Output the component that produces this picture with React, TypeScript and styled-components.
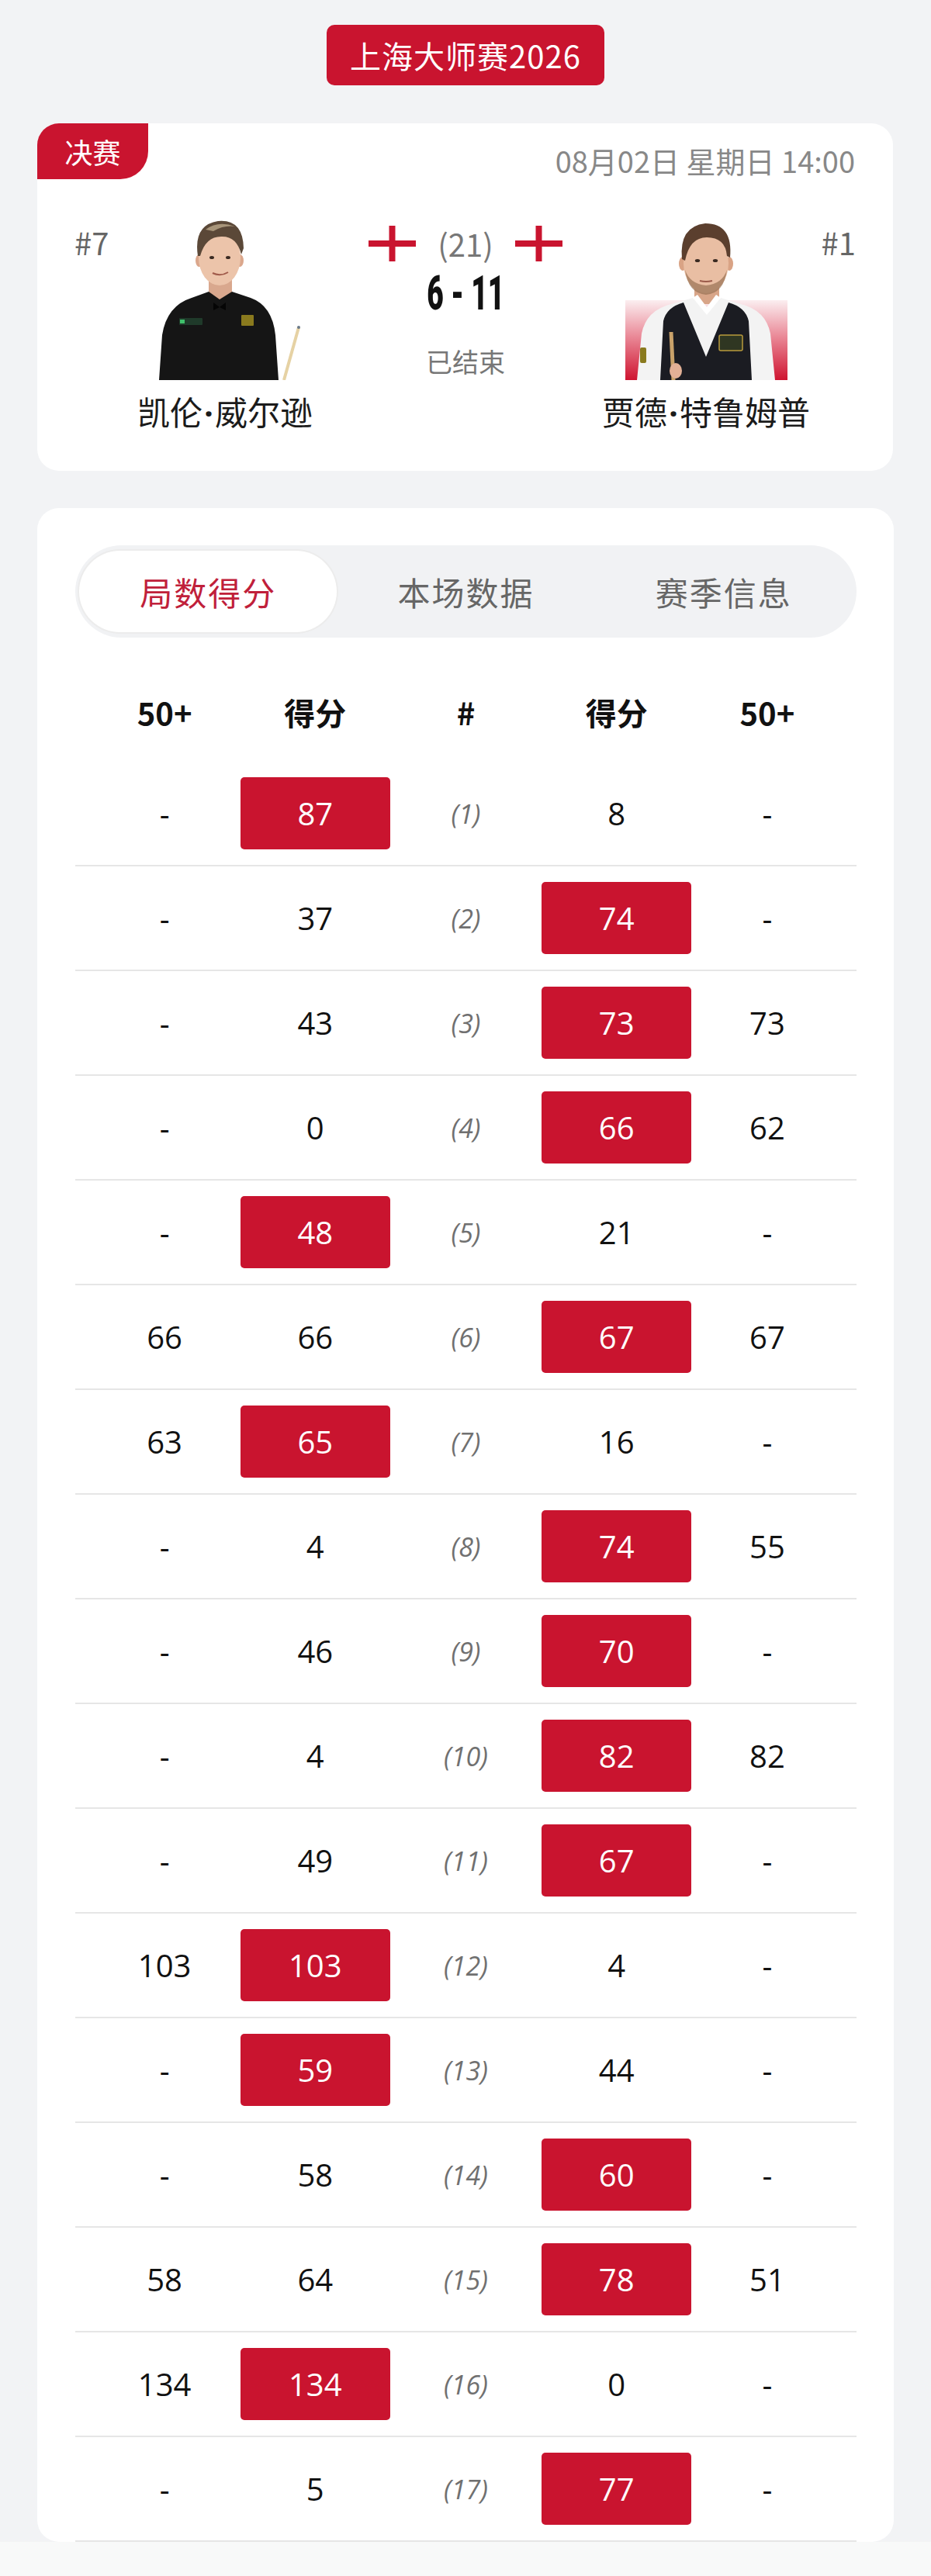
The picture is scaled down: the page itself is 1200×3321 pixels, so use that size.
import styled, { createGlobalStyle } from "styled-components";

const RED = "#c9142f";

type Frame = [string, number, number, number, string];

const frames: Frame[] = [
  ["-", 87, 1, 8, "-"],
  ["-", 37, 2, 74, "-"],
  ["-", 43, 3, 73, "73"],
  ["-", 0, 4, 66, "62"],
  ["-", 48, 5, 21, "-"],
  ["66", 66, 6, 67, "67"],
  ["63", 65, 7, 16, "-"],
  ["-", 4, 8, 74, "55"],
  ["-", 46, 9, 70, "-"],
  ["-", 4, 10, 82, "82"],
  ["-", 49, 11, 67, "-"],
  ["103", 103, 12, 4, "-"],
  ["-", 59, 13, 44, "-"],
  ["-", 58, 14, 60, "-"],
  ["58", 64, 15, 78, "51"],
  ["134", 134, 16, 0, "-"],
  ["-", 5, 17, 77, "-"],
];

const GlobalStyle = createGlobalStyle`
  body {
    margin: 0;
    background: #f2f3f5;
    font-family: "Noto Sans CJK SC", "Noto Sans", sans-serif;
    color: #111;
  }
`;

const EnglandFlag = () => (
  <svg width="61" height="46" viewBox="0 0 61 46">
    <rect x="0" y="19" width="61" height="8" fill={RED} />
    <rect x="26.5" y="0" width="8" height="46" fill={RED} />
  </svg>
);

const WilsonPhoto = () => (
  <svg width="210" height="208" viewBox="0 0 210 208">
    <path d="M84 76 L84 104 L114 104 L114 76 Z" fill="#d9a88e" />
    <path
      d="M20 208 L24 150 Q30 112 62 102 L84 94 L98 104 L114 94 L138 102 Q166 112 170 150 L174 208 Z"
      fill="#151515"
    />
    <path d="M90 108 L98 114 L106 108 L106 118 L98 114 L90 118 Z" fill="#050505" />
    <rect x="46" y="128" width="30" height="9" rx="1" fill="#1f3a2a" />
    <rect x="47" y="130" width="6" height="5" fill="#3fbf6a" />
    <rect x="126" y="124" width="16" height="14" rx="1" fill="#8a7a1e" />
    <ellipse cx="72" cy="54" rx="5" ry="8" fill="#dba78c" />
    <ellipse cx="124" cy="54" rx="5" ry="8" fill="#dba78c" />
    <ellipse cx="98" cy="50" rx="27" ry="36" fill="#ecc4aa" />
    <path
      d="M70 48 Q64 8 96 3 Q128 0 129 38 L126 46 Q120 22 100 23 Q80 23 73 48 Z"
      fill="#5b4838"
    />
    <path d="M80 14 Q96 2 118 10 Q104 8 90 16 Z" fill="#a8957a" />
    <ellipse cx="88" cy="50" rx="3" ry="2" fill="#3a2a22" />
    <ellipse cx="109" cy="50" rx="3" ry="2" fill="#3a2a22" />
    <path d="M89 70 Q99 75 109 69" stroke="#a05a4a" strokeWidth="2" fill="none" />
    <line x1="200" y1="140" x2="181" y2="208" stroke="#e6d2a4" strokeWidth="4" />
    <circle cx="200" cy="140" r="2" fill="#6a7a8a" />
  </svg>
);

const TrumpPhoto = () => (
  <svg width="210" height="208" viewBox="0 0 210 208">
    <defs>
      <linearGradient id="trumpBg" x1="0" y1="0" x2="0" y2="1">
        <stop offset="0" stopColor="#fbeef0" />
        <stop offset="0.45" stopColor="#ea8a98" />
        <stop offset="1" stopColor="#cf1430" />
      </linearGradient>
    </defs>
    <rect x="1" y="105" width="209" height="103" fill="url(#trumpBg)" />
    <path d="M90 82 L90 110 L122 110 L122 82 Z" fill="#d8a588" />
    <path
      d="M16 208 L22 148 Q28 118 60 110 L88 102 L106 120 L124 102 L150 110 Q182 118 188 148 L194 208 Z"
      fill="#f3f3f3"
    />
    <path
      d="M46 208 L50 132 Q54 114 76 108 L105 178 L134 108 Q156 114 160 132 L164 208 Z"
      fill="#1b1c22"
    />
    <path d="M88 102 L106 124 L124 102 L118 98 L106 114 L94 98 Z" fill="#ffffff" />
    <rect x="122" y="150" width="30" height="20" rx="2" fill="#2f3622" stroke="#b99a3c" strokeWidth="1.5" />
    <rect x="20" y="166" width="8" height="20" rx="2" fill="#8a7a1e" />
    <ellipse cx="75" cy="58" rx="5" ry="9" fill="#d9a385" />
    <ellipse cx="135" cy="58" rx="5" ry="9" fill="#d9a385" />
    <ellipse cx="105" cy="57" rx="29" ry="39" fill="#e9bea3" />
    <path
      d="M78 66 Q82 96 105 98 Q128 96 132 66 Q126 84 105 86 Q84 84 78 66 Z"
      fill="#9c7558"
      opacity="0.75"
    />
    <path
      d="M74 52 Q70 10 104 6 Q140 6 136 50 L132 48 Q130 24 106 24 Q84 24 78 54 Z"
      fill="#5b3f2e"
    />
    <ellipse cx="94" cy="54" rx="3.2" ry="2" fill="#3a2a22" />
    <ellipse cx="117" cy="54" rx="3.2" ry="2" fill="#3a2a22" />
    <path d="M97 80 Q105 82 113 80" stroke="#9a5a4a" strokeWidth="2" fill="none" />
    <line x1="60" y1="146" x2="63" y2="208" stroke="#c9a26a" strokeWidth="5" />
    <ellipse cx="66" cy="196" rx="8" ry="10" fill="#e2b096" />
  </svg>
);

export default function App() {
  return (
    <>
      <GlobalStyle />
      <Page>
        <EventBadge>上海大师赛2026</EventBadge>

        <MatchCard>
          <CardHead>
            <RoundTag>决赛</RoundTag>
            <DateText>08月02日 星期日 14:00</DateText>
          </CardHead>
          <Players>
            <Rank>#7</Rank>
            <Player>
              <WilsonPhoto />
              <PlayerName>
                凯伦<Dot>·</Dot>威尔逊
              </PlayerName>
            </Player>
            <Center>
              <FlagRow>
                <EnglandFlag />
                <BestOf>(21)</BestOf>
                <EnglandFlag />
              </FlagRow>
              <Score>
                <span>6 - 11</span>
              </Score>
              <Status>已结束</Status>
            </Center>
            <Player>
              <TrumpPhoto />
              <PlayerName>
                贾德<Dot>·</Dot>特鲁姆普
              </PlayerName>
            </Player>
            <Rank $right>#1</Rank>
          </Players>
        </MatchCard>

        <FramesCard>
          <Tabs>
            <Tab $active>局数得分</Tab>
            <Tab>本场数据</Tab>
            <Tab>赛季信息</Tab>
          </Tabs>

          <TableHead>
            <span>50+</span>
            <span>得分</span>
            <span>#</span>
            <span>得分</span>
            <span>50+</span>
          </TableHead>

          {frames.map(([lBreak, lScore, n, rScore, rBreak]) => (
            <FrameRow key={n}>
              <Cell>{lBreak}</Cell>
              <Cell>
                <Points $win={lScore > rScore}>{lScore}</Points>
              </Cell>
              <FrameNo>({n})</FrameNo>
              <Cell>
                <Points $win={rScore > lScore}>{rScore}</Points>
              </Cell>
              <Cell>{rBreak}</Cell>
            </FrameRow>
          ))}
        </FramesCard>
        <BottomStrip />
      </Page>
    </>
  );
}

const Page = styled.div`
  padding-top: 32px;
`;

const EventBadge = styled.div`
  width: 358px;
  height: 78px;
  margin: 0 auto;
  border-radius: 10px;
  background: ${RED};
  color: #fff;
  font-size: 40px;
  letter-spacing: 1px;
  display: flex;
  align-items: center;
  justify-content: center;
`;

const MatchCard = styled.div`
  margin: 49px 49px 0 48px;
  background: #fff;
  border-radius: 28px;
  overflow: hidden;
  padding-bottom: 50px;
`;

const CardHead = styled.div`
  display: flex;
  justify-content: space-between;
  align-items: flex-start;
  height: 72px;
`;

const RoundTag = styled.div`
  width: 143px;
  height: 72px;
  background: ${RED};
  border-bottom-right-radius: 36px;
  color: #fff;
  font-size: 36px;
  display: flex;
  align-items: center;
  justify-content: center;
`;

const DateText = styled.div`
  margin: 27px 49px 0 0;
  font-size: 38px;
  line-height: 42px;
  color: #888;
`;

const Players = styled.div`
  display: grid;
  grid-template-columns: 60px 268px 1fr 268px 59px;
  padding: 0 48px;
  margin-top: 51px;
`;

const Rank = styled.div<{ $right?: boolean }>`
  padding-top: 6px;
  font-size: 40px;
  line-height: 48px;
  color: #666;
  text-align: ${(p) => (p.$right ? "right" : "left")};
`;

const Player = styled.div`
  display: flex;
  flex-direction: column;
  align-items: center;
`;

const PlayerName = styled.div`
  margin-top: 15px;
  font-size: 42px;
  line-height: 50px;
  color: #1b1b1b;
  white-space: nowrap;
`;

const Dot = styled.span`
  font-family: "Open Sans", sans-serif;
  font-weight: 700;
  padding: 0 2px;
`;

const Center = styled.div`
  display: flex;
  flex-direction: column;
  align-items: center;
  padding-top: 9px;
`;

const FlagRow = styled.div`
  display: flex;
  align-items: center;
  gap: 28px;
`;

const BestOf = styled.span`
  font-size: 40px;
  line-height: 46px;
  color: #777;
`;

const Score = styled.div`
  margin-top: 11px;
  height: 60px;
  display: flex;
  justify-content: center;
  span {
    display: inline-block;
    font-family: Roboto, "DejaVu Sans", sans-serif;
    font-weight: 900;
    font-size: 62px;
    line-height: 60px;
    color: #111;
    transform: scaleX(0.6);
    white-space: nowrap;
  }
`;

const Status = styled.div`
  margin-top: 36px;
  font-size: 34px;
  line-height: 44px;
  color: #777;
`;

const FramesCard = styled.div`
  margin: 48px 48px 0 48px;
  background: #fff;
  border-radius: 28px;
  overflow: hidden;
  padding: 48px 48px 0 49px;
`;

const Tabs = styled.div`
  height: 119px;
  box-sizing: border-box;
  padding: 7px 5px;
  border-radius: 60px;
  background: #f1f2f4;
  display: grid;
  grid-template-columns: repeat(3, 1fr);
`;

const Tab = styled.div<{ $active?: boolean }>`
  border-radius: 54px;
  display: flex;
  align-items: center;
  justify-content: center;
  font-size: 42px;
  letter-spacing: 2px;
  color: ${(p) => (p.$active ? "#c0203a" : "#666")};
  background: ${(p) => (p.$active ? "#fff" : "transparent")};
  box-shadow: ${(p) => (p.$active ? "0 0 0 2px #ececec" : "none")};
`;

const TableHead = styled.div`
  height: 160px;
  box-sizing: border-box;
  padding: 32px 18px 0;
  display: grid;
  grid-template-columns: repeat(5, 1fr);
  align-items: center;
  span {
    text-align: center;
    font-weight: 700;
    font-size: 40px;
    line-height: 128px;
    color: #111;
  }
`;

const FrameRow = styled.div`
  height: 135px;
  box-sizing: border-box;
  border-bottom: 2px solid #e6e6e6;
  padding: 0 18px;
  display: grid;
  grid-template-columns: repeat(5, 1fr);
  align-items: center;
`;

const Cell = styled.div`
  display: flex;
  justify-content: center;
  font-family: "Open Sans", "Noto Sans", sans-serif;
  font-size: 40px;
  color: #111;
`;

const Points = styled.div<{ $win: boolean }>`
  width: 193px;
  height: 93px;
  border-radius: 5px;
  display: flex;
  align-items: center;
  justify-content: center;
  background: ${(p) => (p.$win ? RED : "transparent")};
  color: ${(p) => (p.$win ? "#fff" : "#111")};
`;

const FrameNo = styled.div`
  text-align: center;
  font-family: "Open Sans", "Noto Sans", sans-serif;
  font-style: italic;
  font-size: 34px;
  color: #707070;
`;

const BottomStrip = styled.div`
  height: 46px;
  background: #f8f9f9;
`;
